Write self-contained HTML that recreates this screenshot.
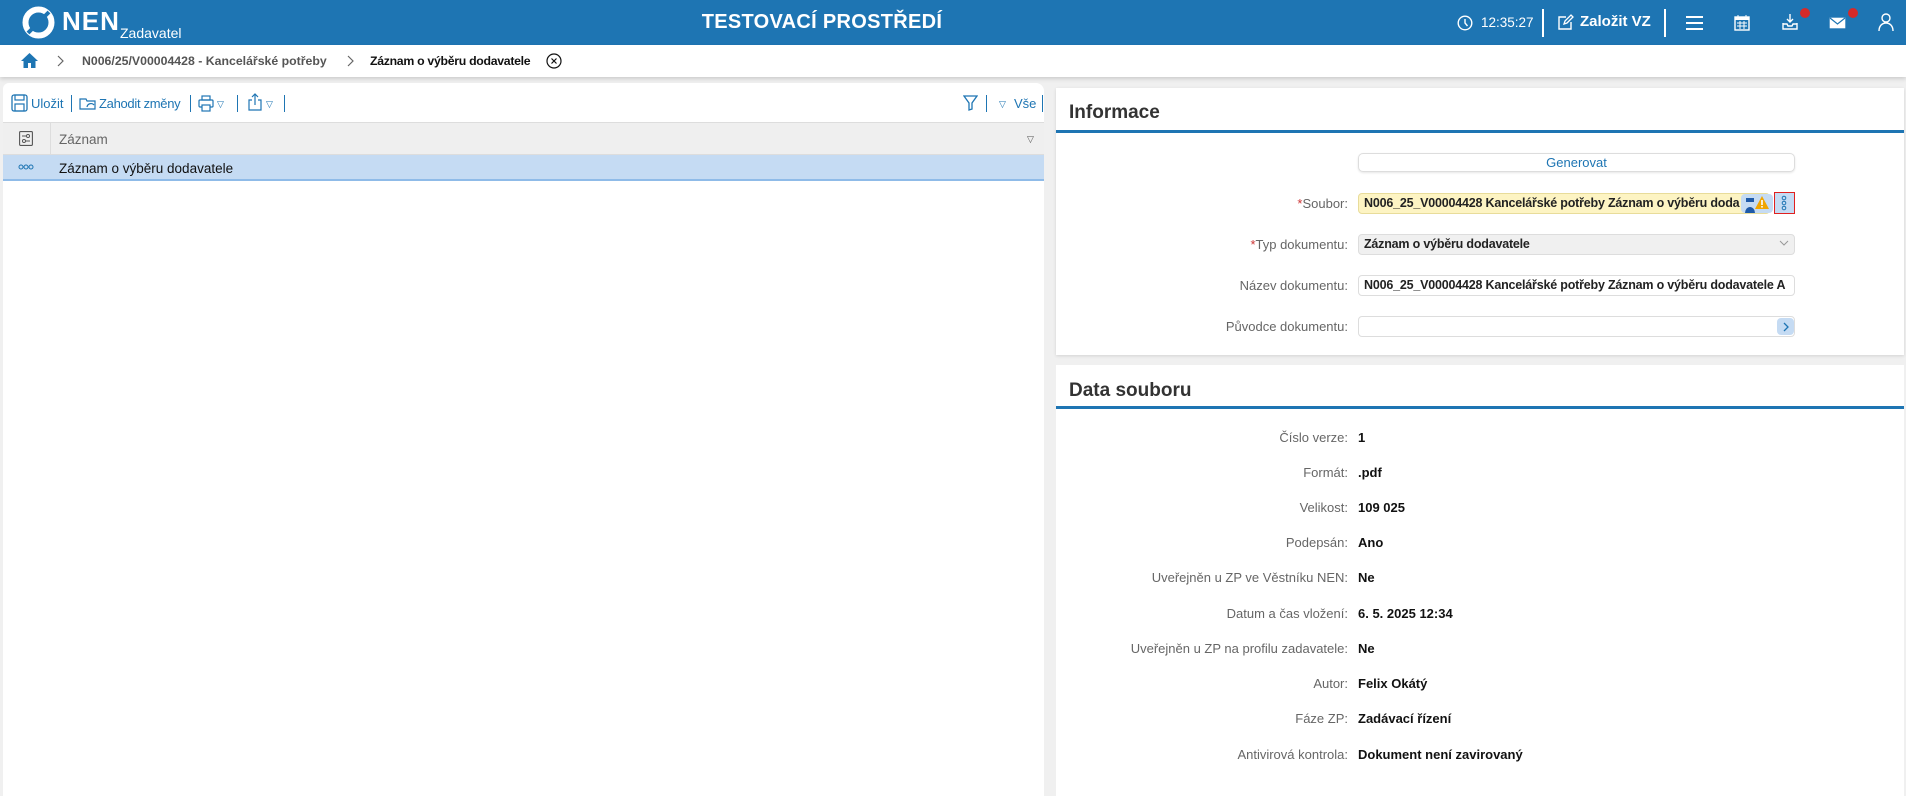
<!DOCTYPE html>
<html><head><meta charset="utf-8"><style>
*{box-sizing:border-box;margin:0;padding:0}
body{width:1906px;height:796px;overflow:hidden;background:#f0f0f0;font-family:"Liberation Sans",sans-serif;position:relative;font-size:14px;color:#222}
.abs{position:absolute}
#hdr{left:0;top:0;width:1906px;height:45px;background:#1e75b3;color:#fff}
#bc{left:0;top:45px;width:1906px;height:32px;background:#fff;box-shadow:0 2px 4px rgba(0,0,0,.15)}
.panel{background:#fff}
.lbl{position:absolute;right:558px;text-align:right;color:#666;font-size:13px;white-space:nowrap}
.val{position:absolute;left:1358px;font-weight:bold;font-size:13px;color:#111;white-space:nowrap}
.inp{position:absolute;left:1358px;width:437px;height:21px;border:1px solid #ddd;border-radius:4px;font-size:12.5px;font-weight:bold;line-height:19px;padding-left:5px;white-space:nowrap;overflow:hidden;letter-spacing:-.2px}
.ptitle{position:absolute;left:1069px;font-weight:bold;font-size:19px;color:#333}
.bline{position:absolute;left:1056px;width:848px;height:3px;background:#1e75b3}
.tb{color:#1e75b3;font-size:13px}
.sep{position:absolute;width:1px;height:17px;background:#1e75b3;top:95px}
</style></head><body>
<div id="hdr" class="abs">
 <svg class="abs" style="left:22px;top:6px" width="33" height="33" viewBox="0 0 33 33"><circle cx="16.5" cy="16.5" r="13" fill="none" stroke="#fff" stroke-width="6"/><path d="M6 27 L27 6" stroke="#1e75b3" stroke-width="4"/></svg>
 <div class="abs" style="left:62px;top:6px;font-size:26px;font-weight:bold;letter-spacing:1px">NEN</div>
 <div class="abs" style="left:120px;top:25px;font-size:14px">Zadavatel</div>
 <div class="abs" style="left:0;width:1644px;top:11px;text-align:center;font-size:20px;font-weight:bold;letter-spacing:.3px">TESTOVACÍ PROSTŘEDÍ</div>
 <svg class="abs" style="left:1457px;top:15px" width="16" height="16" viewBox="0 0 16 16"><circle cx="8" cy="8" r="6.8" fill="none" stroke="#fff" stroke-width="1.4"/><path d="M8 4v4l2.5 3" fill="none" stroke="#fff" stroke-width="1.4"/></svg>
 <div class="abs" style="left:1481px;top:15px;font-size:13.5px">12:35:27</div>
 <div class="abs" style="left:1542px;top:9px;width:2px;height:28px;background:#fff"></div>
 <svg class="abs" style="left:1557px;top:14px" width="17" height="17" viewBox="0 0 17 17"><path d="M9 3H2v12h12V8" fill="none" stroke="#fff" stroke-width="1.4"/><path d="M7 10l1-3 6-6 2 2-6 6z" fill="none" stroke="#fff" stroke-width="1.3"/></svg>
 <div class="abs" style="left:1580px;top:13px;font-size:15px;font-weight:bold">Založit VZ</div>
 <div class="abs" style="left:1664px;top:9px;width:2px;height:28px;background:#fff"></div>
 <svg class="abs" style="left:1686px;top:15px" width="17" height="15"><rect y="1" width="17" height="2" fill="#fff"/><rect y="7" width="17" height="2" fill="#fff"/><rect y="13" width="17" height="2" fill="#fff"/></svg>
 <svg class="abs" style="left:1734px;top:14px" width="16" height="17" viewBox="0 0 16 17"><rect x="1" y="3" width="14" height="13" fill="none" stroke="#fff" stroke-width="1.4"/><rect x="1" y="3" width="14" height="3" fill="#fff"/><path d="M4 1v3M12 1v3M3 9h10M3 12h10M6 7v8M10 7v8" stroke="#fff" stroke-width="1"/></svg>
 <svg class="abs" style="left:1782px;top:13px" width="16" height="17" viewBox="0 0 16 17"><path d="M8 1v8M5 6l3 3 3-3M1 10v6h14v-6M1 11h4l1 2h4l1-2h4" fill="none" stroke="#fff" stroke-width="1.4"/></svg>
 <div class="abs" style="left:1800px;top:8px;width:10px;height:10px;border-radius:50%;background:#d42a2a"></div>
 <svg class="abs" style="left:1829px;top:17px" width="17" height="12" viewBox="0 0 17 12"><rect x=".7" y=".7" width="15.6" height="10.6" fill="#fff"/><path d="M1 1l7.5 6L16 1" fill="none" stroke="#1e75b3" stroke-width="1.2"/></svg>
 <div class="abs" style="left:1848px;top:8px;width:10px;height:10px;border-radius:50%;background:#d42a2a"></div>
 <svg class="abs" style="left:1878px;top:13px" width="16" height="18" viewBox="0 0 16 18"><circle cx="8" cy="5" r="4" fill="none" stroke="#fff" stroke-width="1.4"/><path d="M1 18c0-5 3-8 7-8s7 3 7 8" fill="none" stroke="#fff" stroke-width="1.4"/></svg>
</div>
<div id="bc" class="abs">
 <svg class="abs" style="left:20px;top:7px" width="19" height="17" viewBox="0 0 19 17"><path d="M9.5 1L1 9h2.5v7h4.5v-5h3v5h4.5V9H18z" fill="#1e75b3"/></svg>
 <svg class="abs" style="left:57px;top:10px" width="8" height="12"><path d="M1 1l5 5-5 5" fill="none" stroke="#666" stroke-width="1.2"/></svg>
 <div class="abs" style="left:82px;top:9px;color:#555;font-size:12.3px;font-weight:bold">N006/25/V00004428 - Kancelářské potřeby</div>
 <svg class="abs" style="left:347px;top:10px" width="8" height="12"><path d="M1 1l5 5-5 5" fill="none" stroke="#666" stroke-width="1.2"/></svg>
 <div class="abs" style="left:370px;top:9px;color:#111;font-size:12.3px;font-weight:bold;letter-spacing:-.3px">Záznam o výběru dodavatele</div>
 <svg class="abs" style="left:546px;top:8px" width="16" height="16" viewBox="0 0 16 16"><circle cx="8" cy="8" r="7" fill="none" stroke="#111" stroke-width="1.2"/><path d="M5.5 5.5l5 5M10.5 5.5l-5 5" stroke="#111" stroke-width="1.2"/></svg>
</div>
<!-- left panel -->
<div class="abs panel" style="left:3px;top:83px;width:1041px;height:713px;border-top-right-radius:8px;border-top-left-radius:6px"></div>
<svg class="abs" style="left:11px;top:94px" width="17" height="18" viewBox="0 0 17 18"><rect x="1" y="1" width="15" height="16" rx="2" fill="none" stroke="#1e75b3" stroke-width="1.3"/><rect x="4" y="1" width="9" height="5" fill="none" stroke="#1e75b3" stroke-width="1.2"/><rect x="4" y="10" width="9" height="7" fill="none" stroke="#1e75b3" stroke-width="1.2"/></svg>
<div class="abs tb" style="left:31px;top:96px">Uložit</div>
<div class="sep" style="left:71px"></div>
<svg class="abs" style="left:79px;top:96px" width="18" height="14" viewBox="0 0 18 14"><path d="M1 3h6l1 2h8v8H1z" fill="none" stroke="#1e75b3" stroke-width="1.2"/><path d="M8 11a4 4 0 0 1 7-2" fill="none" stroke="#1e75b3" stroke-width="1.2"/></svg>
<div class="abs tb" style="left:99px;top:96px;letter-spacing:-.3px">Zahodit změny</div>
<div class="sep" style="left:190px"></div>
<svg class="abs" style="left:198px;top:95px" width="16" height="17" viewBox="0 0 16 17"><rect x="4" y="1" width="8" height="4" fill="none" stroke="#1e75b3" stroke-width="1.2"/><rect x="1" y="5" width="14" height="7" rx="1" fill="none" stroke="#1e75b3" stroke-width="1.2"/><rect x="4" y="10" width="8" height="6" fill="#fff" stroke="#1e75b3" stroke-width="1.2"/></svg>
<div class="abs tb" style="left:217px;top:99px;font-size:9px">&#9661;</div>
<div class="sep" style="left:237px"></div>
<svg class="abs" style="left:248px;top:93px" width="14" height="18" viewBox="0 0 14 18"><path d="M7 12V1M4 4l3-3 3 3M4 7H1v10h12V7h-3" fill="none" stroke="#1e75b3" stroke-width="1.2"/></svg>
<div class="abs tb" style="left:266px;top:99px;font-size:9px">&#9661;</div>
<div class="sep" style="left:284px"></div>
<svg class="abs" style="left:963px;top:95px" width="15" height="16" viewBox="0 0 15 16"><path d="M1 1h13L9 8v6l-3 1V8z" fill="none" stroke="#1e75b3" stroke-width="1.3"/></svg>
<div class="sep" style="left:986px"></div>
<div class="abs tb" style="left:999px;top:99px;font-size:9px">&#9661;</div>
<div class="abs tb" style="left:1014px;top:96px">Vše</div>
<div class="sep" style="left:1042px"></div>
<div class="abs" style="left:3px;top:122px;width:1041px;height:33px;background:#efefef;border-top:1px solid #ddd;border-bottom:1px solid #ddd"></div>
<div class="abs" style="left:50px;top:122px;width:1px;height:33px;background:#ddd"></div>
<svg class="abs" style="left:19px;top:131px" width="14" height="15" viewBox="0 0 14 15"><rect x=".6" y=".6" width="12.8" height="13.8" rx="1" fill="none" stroke="#555" stroke-width="1.1"/><path d="M3 5h8M3 10h8" stroke="#555"/><circle cx="9" cy="5" r="1.5" fill="#fff" stroke="#555"/><circle cx="5" cy="10" r="1.5" fill="#fff" stroke="#555"/></svg>
<div class="abs" style="left:59px;top:132px;color:#666;font-size:13.5px">Záznam</div>
<div class="abs" style="left:1027px;top:134px;color:#555;font-size:9px">&#9661;</div>
<div class="abs" style="left:3px;top:155px;width:1041px;height:26px;background:#c5dbf3;border-bottom:2px solid #8fbbe8"></div>
<svg class="abs" style="left:18px;top:164px" width="16" height="6"><circle cx="3" cy="3" r="2" fill="none" stroke="#1e75b3"/><circle cx="8" cy="3" r="2" fill="none" stroke="#1e75b3"/><circle cx="13" cy="3" r="2" fill="none" stroke="#1e75b3"/></svg>
<div class="abs" style="left:59px;top:161px;color:#111;font-size:13.5px">Záznam o výběru dodavatele</div>
<!-- right panel 1 -->
<div class="abs panel" style="left:1056px;top:88px;width:848px;height:267px;box-shadow:0 1px 3px rgba(0,0,0,.12)"></div>
<div class="ptitle" style="top:102px">Informace</div>
<div class="bline" style="top:130px"></div>
<div class="abs" style="left:1358px;top:153px;width:437px;height:19px;border:1px solid #ddd;border-radius:5px;box-shadow:0 1px 2px rgba(0,0,0,.1);text-align:center;color:#1e75b3;font-size:13px;line-height:17px">Generovat</div>
<div class="lbl" style="top:196px"><span style="color:#c33">*</span>Soubor:</div>
<div class="inp" style="top:193px;background:#fdf4c3;width:412px;border-color:#e8dc9a">N006_25_V00004428 Kancelářské potřeby Záznam o výběru doda</div>
<div class="abs" style="left:1741px;top:194px;width:32px;height:19px;background:#c5dbf3;border-radius:4px"></div>
<svg class="abs" style="left:1745px;top:197px" width="10" height="16"><rect x="1" y="1" width="8" height="4" fill="#1e5aa8"/><path d="M0 16a5 6 0 0 1 10 0z" fill="#1e5aa8"/></svg>
<svg class="abs" style="left:1754px;top:195px" width="16" height="15"><path d="M8 1l7 13H1z" fill="#f0a500"/><rect x="7.2" y="5" width="1.6" height="5" fill="#fff"/><rect x="7.2" y="11" width="1.6" height="1.6" fill="#fff"/></svg>
<div class="abs" style="left:1774px;top:192px;width:21px;height:22px;border:1.5px solid #e02020;background:#c5dbf3"></div>
<svg class="abs" style="left:1781px;top:195px" width="6" height="16"><circle cx="3" cy="3" r="1.8" fill="none" stroke="#1e75b3"/><circle cx="3" cy="8" r="1.8" fill="none" stroke="#1e75b3"/><circle cx="3" cy="13" r="1.8" fill="none" stroke="#1e75b3"/></svg>
<div class="lbl" style="top:237px"><span style="color:#c33">*</span>Typ dokumentu:</div>
<div class="inp" style="top:234px;background:#f0f0f0">Záznam o výběru dodavatele</div>
<svg class="abs" style="left:1779px;top:240px" width="10" height="7"><path d="M1 1l4 4 4-4" fill="none" stroke="#999" stroke-width="1"/></svg>
<div class="lbl" style="top:278px">Název dokumentu:</div>
<div class="inp" style="top:275px;background:#fff">N006_25_V00004428 Kancelářské potřeby Záznam o výběru dodavatele A</div>
<div class="lbl" style="top:319px">Původce dokumentu:</div>
<div class="inp" style="top:316px;background:#fff"></div>
<div class="abs" style="left:1777px;top:318px;width:17px;height:17px;background:#c5dbf3;border-radius:4px"></div>
<svg class="abs" style="left:1783px;top:322px" width="6" height="10"><path d="M1 1l4 4-4 4" fill="none" stroke="#1e75b3" stroke-width="1.3"/></svg>
<!-- right panel 2 -->
<div class="abs panel" style="left:1056px;top:365px;width:848px;height:431px"></div>
<div class="ptitle" style="top:380px">Data souboru</div>
<div class="bline" style="top:406px"></div>
<div class="lbl" style="top:430px">Číslo verze:</div><div class="val" style="top:430px">1</div>
<div class="lbl" style="top:465px">Formát:</div><div class="val" style="top:465px">.pdf</div>
<div class="lbl" style="top:500px">Velikost:</div><div class="val" style="top:500px">109 025</div>
<div class="lbl" style="top:535px">Podepsán:</div><div class="val" style="top:535px">Ano</div>
<div class="lbl" style="top:570px">Uveřejněn u ZP ve Věstníku NEN:</div><div class="val" style="top:570px">Ne</div>
<div class="lbl" style="top:606px">Datum a čas vložení:</div><div class="val" style="top:606px">6. 5. 2025 12:34</div>
<div class="lbl" style="top:641px">Uveřejněn u ZP na profilu zadavatele:</div><div class="val" style="top:641px">Ne</div>
<div class="lbl" style="top:676px">Autor:</div><div class="val" style="top:676px">Felix Okátý</div>
<div class="lbl" style="top:711px">Fáze ZP:</div><div class="val" style="top:711px">Zadávací řízení</div>
<div class="lbl" style="top:747px">Antivirová kontrola:</div><div class="val" style="top:747px">Dokument není zavirovaný</div>
</body></html>
